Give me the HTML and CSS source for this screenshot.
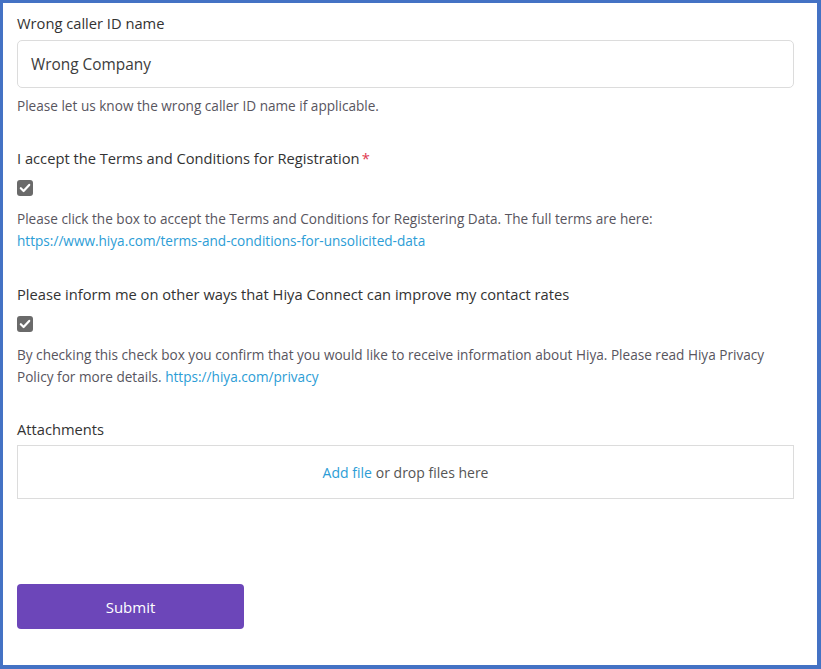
FILE: index.html
```html
<!DOCTYPE html>
<html lang="en">
<head>
<meta charset="utf-8">
<title>Form</title>
<link rel="stylesheet" href="styles.css">
</head>
<body>
<div class="frame">
  <form class="form">
    <div class="field field-first">
      <label class="label">Wrong caller ID name</label>
      <div class="input">Wrong Company</div>
      <p class="help">Please let us know the wrong caller ID name if applicable.</p>
    </div>

    <div class="field">
      <label class="label">I accept the Terms and Conditions for Registration<span class="req">*</span></label>
      <span class="checkbox"><svg viewBox="0 0 16 16" width="16" height="16"><path d="M3.8 8.2 L6.6 11 L12.2 4.9" fill="none" stroke="#fff" stroke-width="2.2" stroke-linecap="round" stroke-linejoin="round"/></svg></span>
      <p class="help help-multi">Please click the box to accept the Terms and Conditions for Registering Data. The full terms are here:<br><a class="link" href="#">https://www.hiya.com/terms-and-conditions-for-unsolicited-data</a></p>
    </div>

    <div class="field">
      <label class="label">Please inform me on other ways that Hiya Connect can improve my contact rates</label>
      <span class="checkbox"><svg viewBox="0 0 16 16" width="16" height="16"><path d="M3.8 8.2 L6.6 11 L12.2 4.9" fill="none" stroke="#fff" stroke-width="2.2" stroke-linecap="round" stroke-linejoin="round"/></svg></span>
      <p class="help help-multi">By checking this check box you confirm that you would like to receive information about Hiya. Please read Hiya Privacy Policy for more details. <a class="link" href="#">https://hiya.com/privacy</a></p>
    </div>

    <div class="field field-attach">
      <label class="label">Attachments</label>
      <div class="dropzone"><a class="link" href="#">Add file</a><span class="drop-text">or drop files here</span></div>
    </div>

    <button type="button" class="submit">Submit</button>
  </form>
</div>
</body>
</html>
```

FILE: styles.css
```css
html, body {
  margin: 0;
  padding: 0;
  background: #fff;
}

.frame {
  box-sizing: border-box;
  width: 821px;
  height: 669px;
  border-style: solid;
  border-color: #4472c4;
  border-width: 3px 4px 4px 3px;
  padding: 10px 23px 0 14px;
  font-family: "Open Sans", "Noto Sans", sans-serif;
  color: #333;
}

.form {
  display: flex;
  flex-direction: column;
}

.field {
  display: flex;
  flex-direction: column;
  align-items: flex-start;
  margin-top: 32px;
}

.field-first {
  margin-top: 0;
}

.field-attach {
  margin-top: 31px;
}

.label {
  font-size: 14.7px;
  line-height: 20px;
  color: #333;
}

.req {
  color: #e0394f;
  margin-left: 2px;
}

.input {
  box-sizing: border-box;
  align-self: stretch;
  height: 48px;
  margin-top: 7px;
  border: 1px solid #dcdcdc;
  border-radius: 5px;
  padding: 0 13px;
  display: flex;
  align-items: center;
  font-size: 15.4px;
  color: #3c3c3c;
}

.help {
  margin: 8px 0 0;
  font-size: 13.6px;
  line-height: 20px;
  color: #58555e;
}

.help-multi {
  line-height: 22px;
  margin-top: 12px;
}

.link {
  color: #2c9dd6;
  text-decoration: none;
}

.checkbox {
  width: 16px;
  height: 16px;
  margin-top: 12px;
  border-radius: 3px;
  background: #6a6a6a;
  display: flex;
}

.dropzone {
  box-sizing: border-box;
  align-self: stretch;
  height: 54px;
  margin-top: 6px;
  border: 1px solid #dcdcdc;
  display: flex;
  align-items: center;
  justify-content: center;
  gap: 4px;
  font-size: 14px;
  color: #555;
}

.submit {
  align-self: flex-start;
  margin-top: 85px;
  width: 227px;
  height: 45px;
  border: none;
  border-radius: 4px;
  background: #6c46b9;
  color: #fff;
  font-family: "Open Sans", "Noto Sans", sans-serif;
  font-size: 15px;
}
```
